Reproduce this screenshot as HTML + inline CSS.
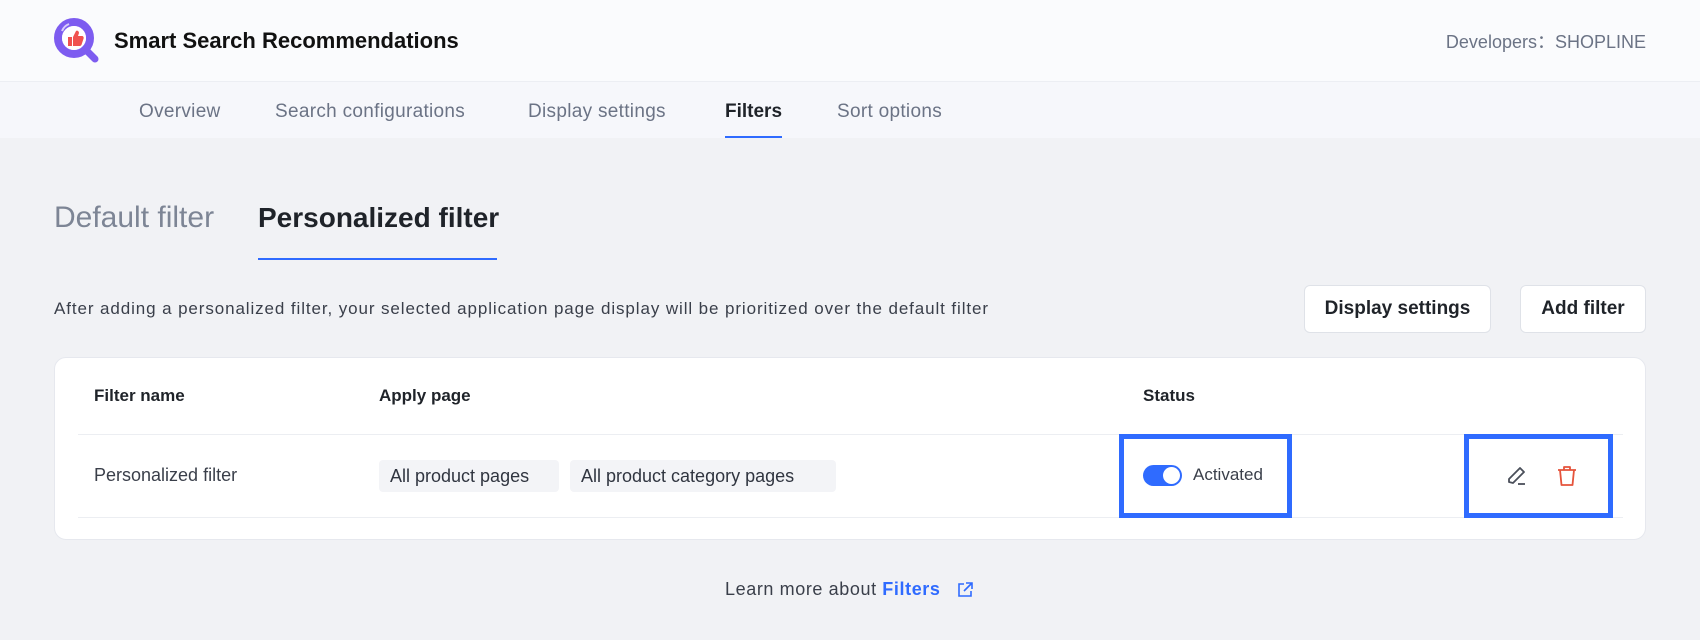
<!DOCTYPE html>
<html><head><meta charset="utf-8"><style>
*{margin:0;padding:0;box-sizing:border-box}
body{width:1700px;height:640px;background:#f1f2f5;font-family:"Liberation Sans",Arial,sans-serif;position:relative;overflow:hidden;color:#1f2329}
.abs{position:absolute;white-space:nowrap}
#hdr{position:absolute;left:0;top:0;width:1700px;height:82px;background:#fafbfd;border-bottom:1px solid #eceef3}
#nav{position:absolute;left:0;top:82px;width:1700px;height:56px;background:#f6f7fb}
.nv{position:absolute;top:101px;font-size:19px;letter-spacing:0.3px;color:#6b7385}
.card{position:absolute;left:54px;top:357px;width:1592px;height:183px;background:#fff;border-radius:12px;border:1px solid #e6e8ee}
.btn{position:absolute;top:285px;height:48px;background:#fff;border:1px solid #dfe2e8;border-radius:6px;font-size:19px;font-weight:bold;display:flex;align-items:center;justify-content:center;color:#1f2329}
.tag{position:absolute;top:460px;height:32px;background:#f3f4f7;border-radius:4px;font-size:18px;color:#303540;display:flex;align-items:center;padding:0 11px}
.hl{position:absolute;border:5px solid #2f6bff}
</style></head><body>
<div id="hdr"></div>
<svg class="abs" style="left:53px;top:17px" width="48" height="48" viewBox="0 0 48 48">
<circle cx="21" cy="21" r="16" fill="none" stroke="#7d5cf0" stroke-width="8"/>
<circle cx="21" cy="21" r="12" fill="#fff"/>
<path d="M32 32 L42 42" stroke="#7d5cf0" stroke-width="7" stroke-linecap="round"/>
<path d="M15 20h4v9h-4z M20 20 l3-6 c1-1 3 0 3 2 l-1 3h4 c1 0 2 1 1.6 2.5 l-2 6 c-.3 1-1 1.5-2 1.5H20z" fill="#f0524f"/>
<path d="M9 14 q2-5 7-7" stroke="#fff" stroke-width="2" fill="none" opacity=".7"/>
</svg>
<div class="abs" style="left:114px;top:28px;font-size:22px;font-weight:bold;color:#111">Smart Search Recommendations</div>
<div class="abs" style="right:54px;top:28px;font-size:18px;color:#6b7385">Developers：SHOPLINE</div>
<div id="nav"></div>
<div class="nv" style="left:139px">Overview</div>
<div class="nv" style="left:275px">Search configurations</div>
<div class="nv" style="left:528px">Display settings</div>
<div class="nv" style="left:725px;color:#1f2329;font-weight:bold;letter-spacing:0">Filters</div>
<div class="abs" style="left:725px;top:136px;width:57px;height:2px;background:#2f6bff"></div>
<div class="nv" style="left:837px">Sort options</div>
<div class="abs" style="left:54px;top:201px;font-size:30px;color:#7d8595">Default filter</div>
<div class="abs" style="left:258px;top:202px;font-size:28px;font-weight:bold;color:#1f2329">Personalized filter</div>
<div class="abs" style="left:258px;top:258px;width:239px;height:2px;background:#2f6bff"></div>
<div class="abs" style="left:54px;top:299px;font-size:17px;letter-spacing:0.9px;color:#3a3f4a">After adding a personalized filter, your selected application page display will be prioritized over the default filter</div>
<div class="btn" style="left:1304px;width:187px">Display settings</div>
<div class="btn" style="left:1520px;width:126px">Add filter</div>
<div class="card"></div>
<div class="abs" style="left:94px;top:386px;font-size:17px;font-weight:bold;color:#1f2329">Filter name</div>
<div class="abs" style="left:379px;top:386px;font-size:17px;font-weight:bold;color:#1f2329">Apply page</div>
<div class="abs" style="left:1143px;top:386px;font-size:17px;font-weight:bold;color:#1f2329">Status</div>
<div class="abs" style="left:78px;top:434px;width:1545px;height:1px;background:#eceef2"></div>
<div class="abs" style="left:78px;top:517px;width:1545px;height:1px;background:#eceef2"></div>
<div class="abs" style="left:94px;top:465px;font-size:18px;color:#3a3f4a">Personalized filter</div>
<div class="tag" style="left:379px;width:180px">All product pages</div>
<div class="tag" style="left:570px;width:266px">All product category pages</div>
<div class="abs" style="left:1143px;top:465px;width:39px;height:21px;border-radius:11px;background:#2f6bff"></div>
<div class="abs" style="left:1163px;top:467px;width:17px;height:17px;border-radius:50%;background:#fff"></div>
<div class="abs" style="left:1193px;top:465px;font-size:17px;color:#3a3f4a">Activated</div>
<div class="hl" style="left:1119px;top:434px;width:173px;height:84px"></div>
<div class="hl" style="left:1464px;top:434px;width:149px;height:84px"></div>
<svg class="abs" style="left:1505px;top:464px" width="24" height="24" viewBox="0 0 24 24" fill="none" stroke="#4a4f5a" stroke-width="1.8" stroke-linejoin="round"><path d="M4 18 L4 15 L15 4 L19 8 L8 19 Z"/><path d="M13 20h7"/></svg>
<svg class="abs" style="left:1555px;top:464px" width="24" height="24" viewBox="0 0 24 24" fill="none" stroke="#e5533b" stroke-width="1.8" stroke-linejoin="round"><path d="M3 6h18 M9 6V3h6v3 M5 6l1.5 15h11L19 6"/></svg>
<div class="abs" style="left:725px;top:579px;font-size:18px;letter-spacing:0.6px;color:#3a3f4a">Learn more about <span style="color:#2f6bff;font-weight:bold">Filters</span></div>
<svg class="abs" style="left:955px;top:580px" width="20" height="20" viewBox="0 0 20 20" fill="none" stroke="#2f6bff" stroke-width="1.6"><path d="M9 4H4v12h12v-5 M11 3h6v6 M17 3l-8 8"/></svg>
</body></html>
